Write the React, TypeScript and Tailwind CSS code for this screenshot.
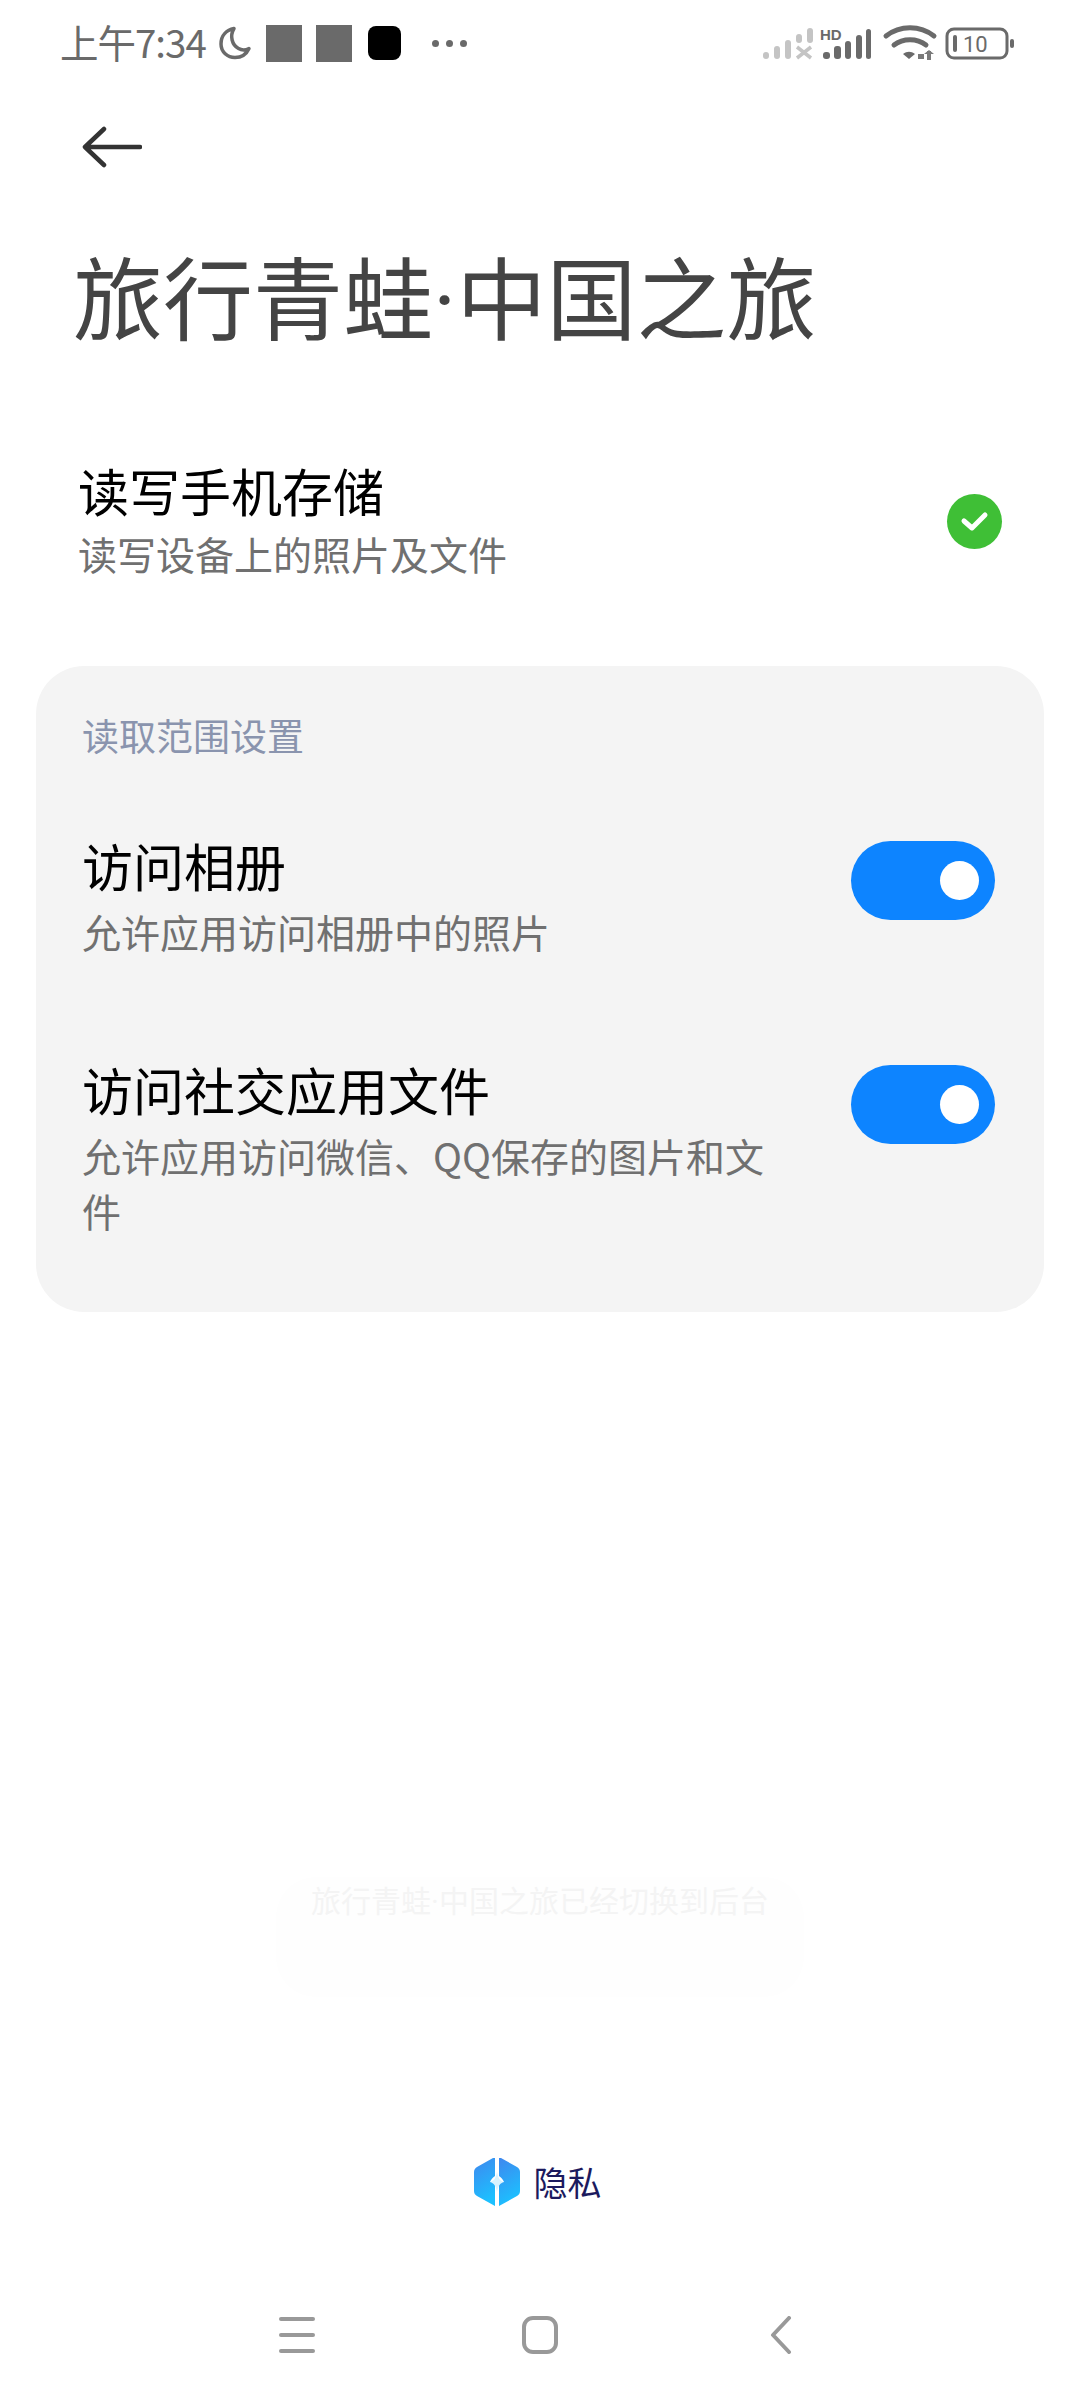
const FONT = "font-['Noto_Sans_CJK_SC','Noto_Sans',sans-serif]";

function Dot() {
  return <span className="font-['Roboto',sans-serif]">·</span>;
}

function StatusBar() {
  return (
    <div className="flex h-[80px] items-start justify-between pl-[60px] pr-[64px] pt-[23px]">
      <div className="flex h-[40px] items-center">
        <span className="mt-[-4px] w-[157px] whitespace-nowrap text-[38.500px] leading-[40px] tracking-[-1px] text-[#6a6a6a]">上午7:34</span>
        <svg width="36" height="36" viewBox="0 0 36 36">
          <path d="M17 3.500C10 5 4 10 4 19c0 8 6.500 13.500 14 13.500 6.500 0 11.500-3.500 14-9-3 1.500-7 2-10.500 0C15 20 12.500 11 17 3.500Z" fill="none" stroke="#6a6a6a" strokeWidth="3.500" strokeLinejoin="round" />
        </svg>
        <div className="ml-[13px] h-[37px] w-[36px] bg-[#6a6a6a]" />
        <div className="ml-[14px] h-[37px] w-[36px] bg-[#6a6a6a]" />
        <div className="ml-[16px] h-[34px] w-[33px] rounded-[8px] bg-black" />
        <div className="ml-[31px] flex gap-[7px]">
          <div className="h-[7px] w-[7px] rounded-full bg-[#6a6a6a]" />
          <div className="h-[7px] w-[7px] rounded-full bg-[#6a6a6a]" />
          <div className="h-[7px] w-[7px] rounded-full bg-[#6a6a6a]" />
        </div>
      </div>
      <svg width="256" height="42" viewBox="0 0 256 42" className="mt-[-2px]">
        <g fill="#c4c4c4">
          <rect x="3" y="31" width="6" height="7" rx="3" />
          <rect x="14" y="25" width="6" height="13" rx="3" />
          <rect x="25" y="19" width="6" height="19" rx="3" />
          <rect x="36" y="13" width="6" height="9" rx="3" />
          <rect x="47" y="7" width="6" height="15" rx="3" />
        </g>
        <path d="M37 26l14 11M51 26L37 37" stroke="#c4c4c4" strokeWidth="3.500" />
        <g fill="#6a6a6a">
          <rect x="63" y="31" width="7" height="7" rx="3" />
          <rect x="74" y="25" width="7" height="13" rx="3" />
          <rect x="85" y="20" width="6" height="18" rx="3" />
          <rect x="96" y="14" width="6" height="24" rx="3" />
          <rect x="106" y="8" width="5" height="30" rx="2.500" />
        </g>
        <text x="60" y="19" fontSize="15" fontWeight="700" fill="#6a6a6a" fontFamily="Liberation Sans, sans-serif">HD</text>
        <path d="M126 15C140 4 160 4 174 15" fill="none" stroke="#6a6a6a" strokeWidth="5" strokeLinecap="round" />
        <path d="M134 24C143 17 157 17 166 24" fill="none" stroke="#6a6a6a" strokeWidth="5" strokeLinecap="round" />
        <path d="M143 33c4-3 8-3 12 0l-6 5z" fill="#6a6a6a" />
        <path d="M158 33h6v5h-6zM167 30h4v9h-4zM164 33l5-4 5 4z" fill="#6a6a6a" opacity="0.9" />
        <rect x="187" y="8" width="60" height="29" rx="7" fill="none" stroke="#6a6a6a" strokeWidth="3" />
        <rect x="193" y="14" width="4" height="17" rx="2" fill="#6a6a6a" />
        <text x="203" y="31" fontSize="22" fill="#6a6a6a" fontFamily="Roboto, sans-serif">10</text>
        <rect x="250" y="18" width="4" height="9" rx="2" fill="#6a6a6a" />
      </svg>
    </div>
  );
}

function Toggle() {
  return (
    <div className="mt-[6px] flex h-[79px] w-[144px] shrink-0 items-center justify-end rounded-full bg-[#0d84ff] pr-[16px]">
      <div className="h-[39px] w-[39px] rounded-full bg-white" />
    </div>
  );
}

function SettingRow({ title, desc, className }: { title: string; desc: string; className: string }) {
  return (
    <div className={`flex items-start justify-between ${className}`}>
      <div className="w-[700px]">
        <div className="text-[51px] leading-[60px] text-black">{title}</div>
        <div className="mt-[9px] text-[39px] leading-[55px] text-[#707070]">{desc}</div>
      </div>
      <Toggle />
    </div>
  );
}

export default function App() {
  return (
    <div className={`flex h-[2400px] w-[1080px] flex-col overflow-hidden bg-white ${FONT}`}>
      <StatusBar />
      <svg width="60" height="42" viewBox="0 0 60 42" className="ml-[82px] mt-[46px]" fill="none" stroke="#333333" strokeWidth="4.500" strokeLinecap="round" strokeLinejoin="round">
        <path d="M3 21h55M22 3L3 21l19 18" />
      </svg>
      <h1 className="ml-[73px] mt-[71px] whitespace-nowrap text-[90px] font-normal leading-[110px] text-[#444444]">旅行青蛙<Dot />中国之旅</h1>

      <div className="mt-[102px] flex items-center justify-between pl-[78px] pr-[78px]">
        <div>
          <div className="text-[51px] leading-[60px] text-black">读写手机存储</div>
          <div className="mt-[8px] text-[39px] leading-[50px] text-[#707070]">读写设备上的照片及文件</div>
        </div>
        <div className="mt-[4px] flex h-[55px] w-[55px] items-center justify-center rounded-full bg-[#3fbf36]">
          <svg width="30" height="24" viewBox="0 0 30 24" fill="none" stroke="white" strokeWidth="5" strokeLinecap="round" strokeLinejoin="round">
            <path d="M4 12l8 7L25 6" />
          </svg>
        </div>
      </div>

      <div className="mx-[36px] mt-[88px] h-[646px] rounded-[48px] bg-[#f4f4f4] pl-[46px] pr-[49px] pt-[46px]">
        <div className="text-[37px] leading-[46px] text-[#8a94ae]">读取范围设置</div>
        <SettingRow className="mt-[77px]" title="访问相册" desc="允许应用访问相册中的照片" />
        <SettingRow className="mt-[100px]" title="访问社交应用文件" desc="允许应用访问微信、QQ保存的图片和文件" />
      </div>

      <div className="mx-auto mt-[565px] h-[120px] w-[528px] rounded-[40px] bg-[#fefefe] text-center text-[30px] leading-[44px] text-[#f4f4f4]">旅行青蛙<Dot />中国之旅已经切换到后台</div>

      <div className="mt-[160px] flex items-center justify-center gap-[14px] pr-[5px]">
        <svg width="46" height="50" viewBox="0 0 46 50">
          <defs>
            <linearGradient id="hex" x1="0" y1="0" x2="0.3" y2="1">
              <stop offset="0" stopColor="#3f87ee" />
              <stop offset="1" stopColor="#1cc0ff" />
            </linearGradient>
          </defs>
          <path d="M21 1v18c-3 2-4 4-5 6h5v24L3 39c-2-1-3-3-3-5V15c0-2 1-4 3-5L19 1z" fill="url(#hex)" />
          <path d="M25 1v18c3 2 4 4 5 6h-5v24l18-10c2-1 3-3 3-5V15c0-2-1-4-3-5L27 1z" fill="url(#hex)" />
          <path d="M23 15c1 6 3 9 7 10-4 1-6 4-7 10-1-6-3-9-7-10 4-1 6-4 7-10z" fill="#d8f3ff" />
        </svg>
        <span className="text-[34px] leading-[50px] text-[#1c1a5e]">隐私</span>
      </div>

      <div className="mt-[109px] flex items-center pl-[279px]">
        <div className="flex w-[36px] flex-col gap-[12px]">
          <div className="h-[4px] rounded-full bg-[#999999]" />
          <div className="h-[4px] rounded-full bg-[#999999]" />
          <div className="h-[4px] rounded-full bg-[#999999]" />
        </div>
        <div className="ml-[207px] h-[38px] w-[36px] rounded-[11px] border-[4px] border-[#999999]" />
        <svg width="22" height="38" viewBox="0 0 22 38" className="ml-[212px]" fill="none" stroke="#999999" strokeWidth="4" strokeLinecap="round" strokeLinejoin="round">
          <path d="M19 2L3 19l16 17" />
        </svg>
      </div>
    </div>
  );
}
